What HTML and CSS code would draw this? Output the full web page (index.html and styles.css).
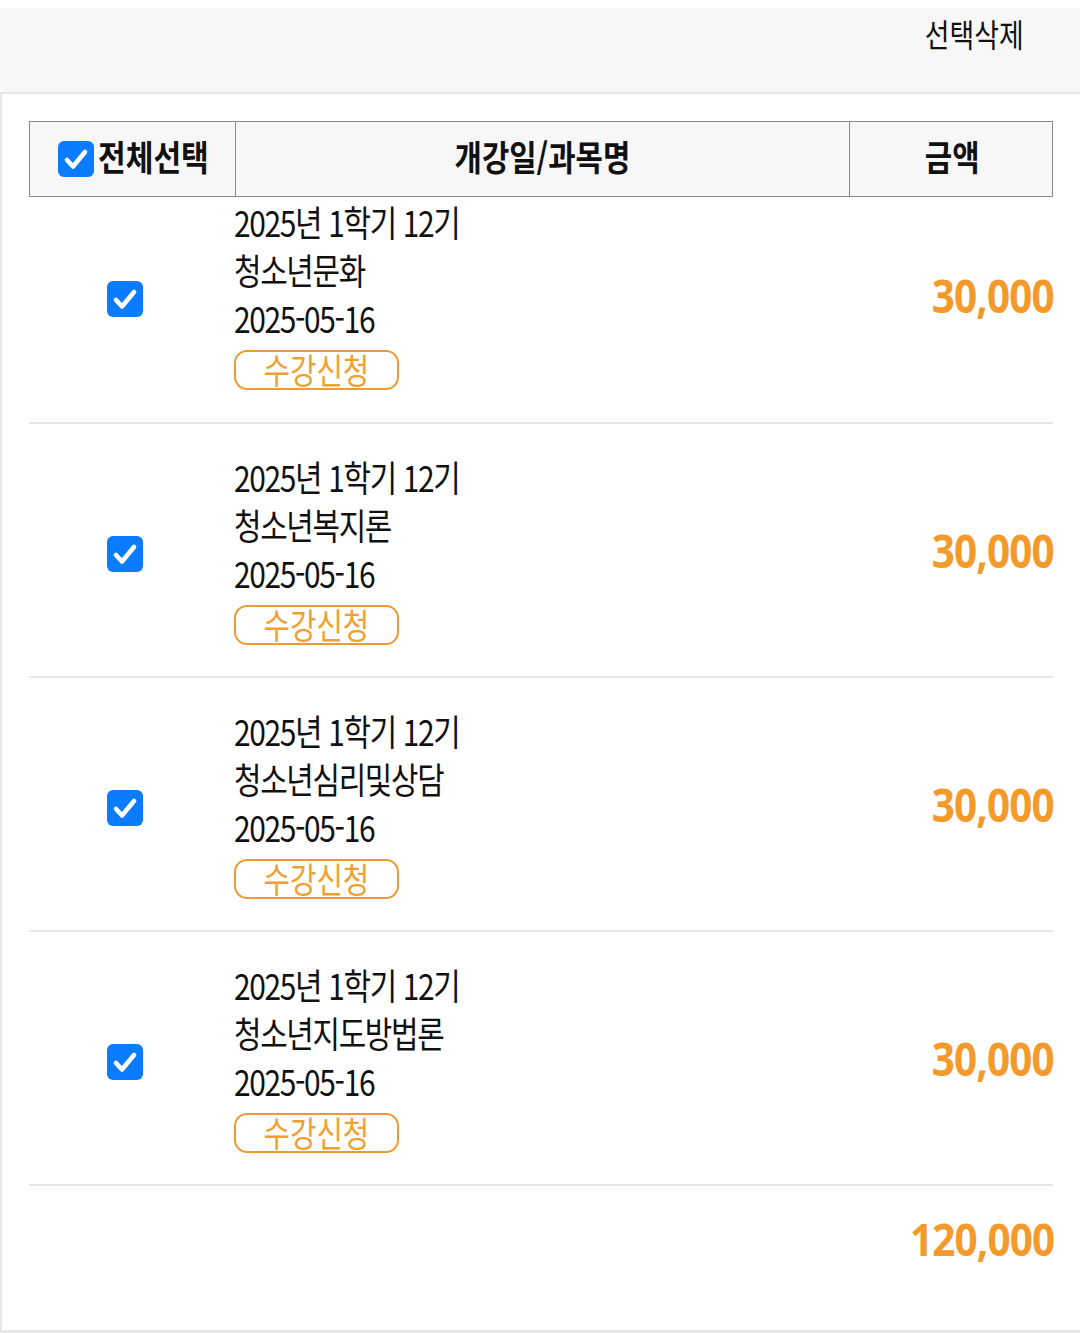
FILE: index.html
```html
<!DOCTYPE html>
<html lang="ko">
<head>
<meta charset="utf-8">
<link rel="stylesheet" href="styles.css">
</head>
<body>
<div class="topbar"><span class="sq sq-r del">선택삭제</span></div>
<main class="cart">
  <div class="thead">
    <div class="th th-check">
      <svg class="cb" viewBox="0 0 36 36"><rect x="0" y="0" width="36" height="36" rx="6" fill="#0b7bff"/><polyline points="9,19 15,25.5 27,11" fill="none" stroke="#fff" stroke-width="4.6" stroke-linecap="round" stroke-linejoin="round"/></svg>
      <span class="sq sq-l">전체선택</span>
    </div>
    <div class="th"><span class="sq sq-c">개강일/과목명</span></div>
    <div class="th"><span class="sq sq-c">금액</span></div>
  </div>

  <div class="row first">
    <div class="c-check"><svg class="cb" viewBox="0 0 36 36"><rect x="0" y="0" width="36" height="36" rx="6" fill="#0b7bff"/><polyline points="9,19 15,25.5 27,11" fill="none" stroke="#fff" stroke-width="4.6" stroke-linecap="round" stroke-linejoin="round"/></svg></div>
    <div class="c-info">
      <span class="sq sq-l line">2025년 1학기 12기</span>
      <span class="sq sq-l line">청소년문화</span>
      <span class="sq sq-l line">2025-05-16</span>
      <div class="btn"><span class="sq sq-c">수강신청</span></div>
    </div>
    <div class="c-price"><span class="sq sq-r price">30,000</span></div>
  </div>

  <div class="row">
    <div class="c-check"><svg class="cb" viewBox="0 0 36 36"><rect x="0" y="0" width="36" height="36" rx="6" fill="#0b7bff"/><polyline points="9,19 15,25.5 27,11" fill="none" stroke="#fff" stroke-width="4.6" stroke-linecap="round" stroke-linejoin="round"/></svg></div>
    <div class="c-info">
      <span class="sq sq-l line">2025년 1학기 12기</span>
      <span class="sq sq-l line">청소년복지론</span>
      <span class="sq sq-l line">2025-05-16</span>
      <div class="btn"><span class="sq sq-c">수강신청</span></div>
    </div>
    <div class="c-price"><span class="sq sq-r price">30,000</span></div>
  </div>

  <div class="row">
    <div class="c-check"><svg class="cb" viewBox="0 0 36 36"><rect x="0" y="0" width="36" height="36" rx="6" fill="#0b7bff"/><polyline points="9,19 15,25.5 27,11" fill="none" stroke="#fff" stroke-width="4.6" stroke-linecap="round" stroke-linejoin="round"/></svg></div>
    <div class="c-info">
      <span class="sq sq-l line">2025년 1학기 12기</span>
      <span class="sq sq-l line">청소년심리및상담</span>
      <span class="sq sq-l line">2025-05-16</span>
      <div class="btn"><span class="sq sq-c">수강신청</span></div>
    </div>
    <div class="c-price"><span class="sq sq-r price">30,000</span></div>
  </div>

  <div class="row">
    <div class="c-check"><svg class="cb" viewBox="0 0 36 36"><rect x="0" y="0" width="36" height="36" rx="6" fill="#0b7bff"/><polyline points="9,19 15,25.5 27,11" fill="none" stroke="#fff" stroke-width="4.6" stroke-linecap="round" stroke-linejoin="round"/></svg></div>
    <div class="c-info">
      <span class="sq sq-l line">2025년 1학기 12기</span>
      <span class="sq sq-l line">청소년지도방법론</span>
      <span class="sq sq-l line">2025-05-16</span>
      <div class="btn"><span class="sq sq-c">수강신청</span></div>
    </div>
    <div class="c-price"><span class="sq sq-r price">30,000</span></div>
  </div>

  <div class="total"><span class="sq sq-r total-num">120,000</span></div>
</main>
</body>
</html>
```
FILE: styles.css
```css
html, body {
  margin: 0;
  padding: 0;
  background: #fff;
}
body {
  font-family: "Noto Sans CJK KR", "Noto Sans", sans-serif;
  color: #111;
  padding-top: 8px;
}
.sq {
  display: inline-block;
  white-space: nowrap;
  transform: scaleX(0.77);
}
.sq-l { transform-origin: left center; }
.sq-r { transform-origin: right center; }
.sq-c { transform-origin: center center; }

.topbar {
  background: #f7f7f7;
  border-bottom: 2px solid #e6e6e6;
  display: flex;
  justify-content: flex-end;
  align-items: flex-start;
  padding: 5px 56px 0 0;
  box-sizing: border-box;
  height: 86px;
}
.del {
  font-size: 32px;
  line-height: 40px;
  transform: scaleX(0.84);
}

.cart {
  border-left: 2px solid #e8e8e8;
  border-bottom: 3px solid #e8e8e8;
  padding: 27px 27px 0 27px;
  height: 1239px;
  box-sizing: border-box;
}

.thead {
  display: grid;
  grid-template-columns: 205px 614px 205px;
  border: 1.5px solid #8a8a8a;
  background: #f7f7f7;
  height: 76px;
  box-sizing: border-box;
}
.th {
  display: flex;
  align-items: center;
  justify-content: center;
  font-size: 35px;
  font-weight: 700;
  line-height: 40px;
  padding-bottom: 6px;
  border-left: 1.5px solid #8a8a8a;
}
.th .sq { transform: scaleX(0.85); }
.th:first-child { border-left: none; }
.th-check {
  justify-content: flex-start;
  padding-left: 28px;
  gap: 4px;
}
.th-check .cb { margin-top: 6px; }
.th-check .sq { transform: scaleX(0.86); }

.cb {
  width: 36px;
  height: 36px;
  display: block;
  flex: none;
}

.row {
  display: grid;
  grid-template-columns: 205px 614px 205px;
  border-bottom: 2px solid #e6e6e6;
  padding: 28px 0 31px;
}
.row.first { padding-top: 0; padding-bottom: 32px; }

.c-check {
  display: flex;
  align-items: center;
  justify-content: center;
  padding-right: 14px;
  padding-top: 11px;
}
.c-info {
  display: flex;
  flex-direction: column;
  align-items: flex-start;
  font-size: 36px;
  line-height: 48px;
}
.line {
  transform: scaleX(0.83);
  letter-spacing: -1.6px;
}
.btn {
  margin-top: 9px;
  width: 165px;
  height: 40px;
  box-sizing: border-box;
  border: 2px solid #ec9a35;
  border-radius: 13px;
  color: #f0a030;
  font-size: 35px;
  line-height: 34px;
  display: flex;
  justify-content: center;
  align-items: center;
}
.btn .sq { transform: scaleX(0.82); margin-top: -2px; }

.c-price {
  display: flex;
  align-items: center;
  justify-content: flex-end;
  margin-right: -1px;
}
.price {
  font-family: "Open Sans", "Noto Sans", sans-serif;
  color: #f39a2b;
  font-size: 47px;
  font-weight: 700;
  line-height: 56px;
  letter-spacing: -1px;
  transform: scaleX(0.86);
  padding-top: 2px;
}

.total {
  display: flex;
  justify-content: flex-end;
  padding-top: 25px;
  margin-right: -1px;
}
.total-num {
  font-family: "Open Sans", "Noto Sans", sans-serif;
  color: #f39a2b;
  font-size: 45px;
  font-weight: 700;
  line-height: 56px;
  letter-spacing: -1px;
  transform: scaleX(0.9);
}
```
